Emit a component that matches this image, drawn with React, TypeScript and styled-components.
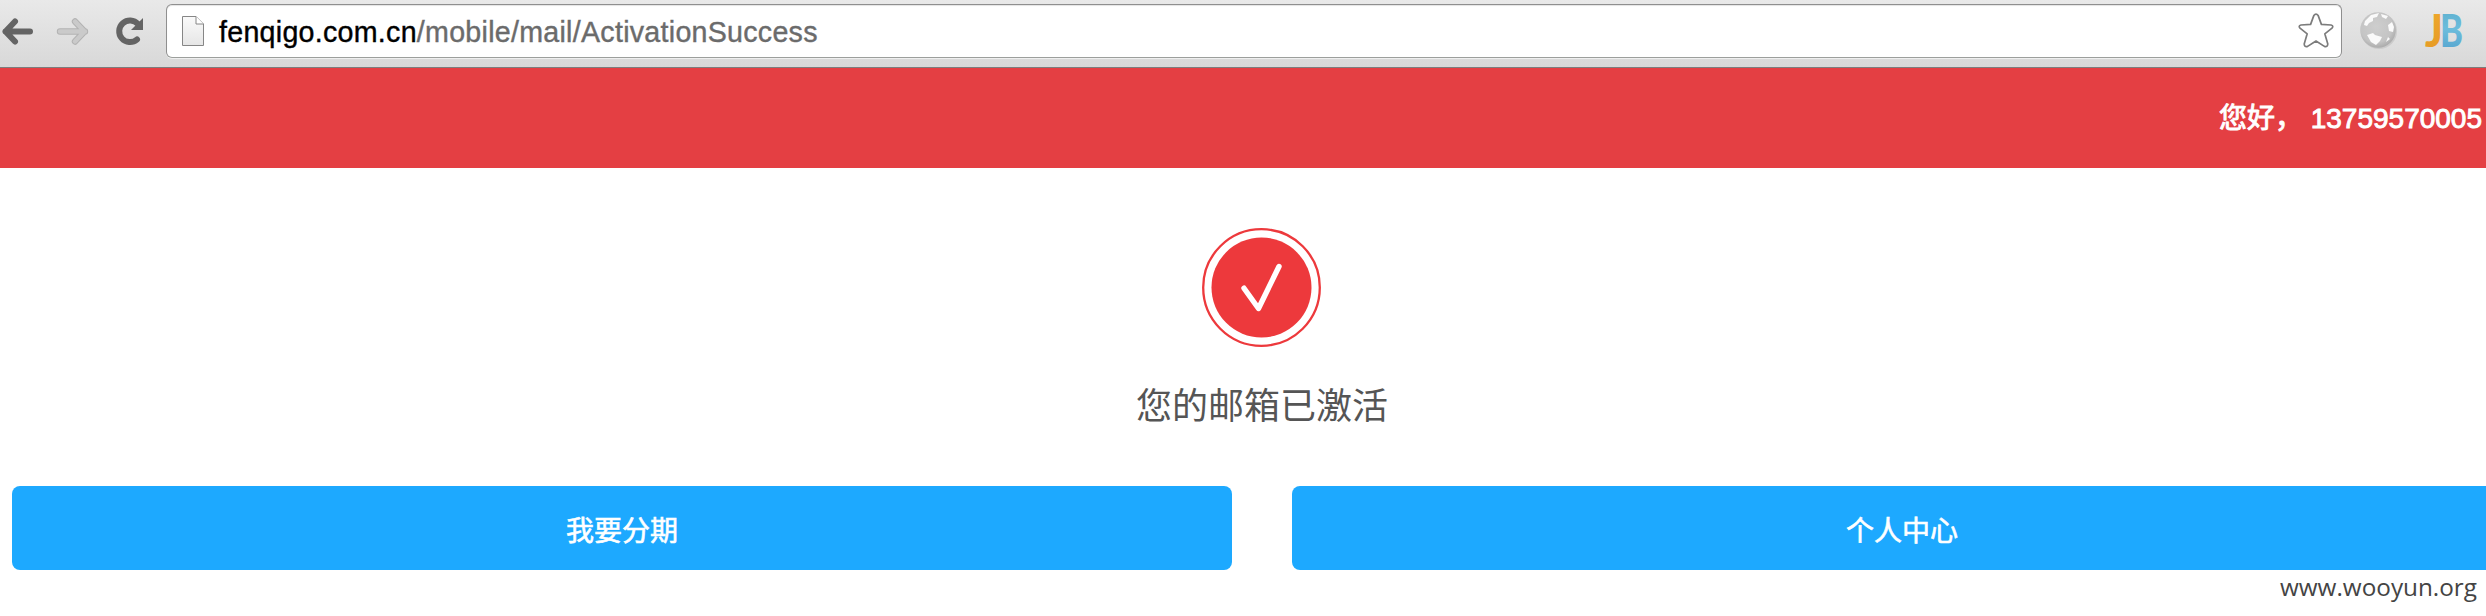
import React from "react";
import styled, { createGlobalStyle } from "styled-components";

const GlobalStyle = createGlobalStyle`
  * { box-sizing: border-box; }
  html, body { margin: 0; background: #fff; overflow: hidden; }
  body { font-family: "Liberation Sans", "Noto Sans CJK SC", sans-serif; }
`;

const Screen = styled.div`
  position: relative;
  width: 100vw;
  height: 616px;
  overflow: hidden;
`;

const Toolbar = styled.div`
  display: flex;
  align-items: flex-start;
  height: 68px;
  background: linear-gradient(#e9e9e9, #d8d8d8);
  border-bottom: 1px solid #7d7d7d;
`;

const NavIcons = styled.div`
  flex: none;
  width: 166px;
  height: 67px;
`;

const AddressBar = styled.div`
  display: flex;
  align-items: center;
  flex: none;
  width: 2176px;
  height: 54px;
  margin-top: 4px;
  padding: 0 7px 0 14px;
  background: #fff;
  border: 1px solid #8f8f8f;
  border-bottom-color: #9c9f9c;
  border-radius: 6px;
  box-shadow: inset 0 1px 1px #e4e4e4, 0 1px 0 #efefef;
`;

const Url = styled.div`
  flex: 1;
  margin-left: 14px;
  padding-top: 2px;
  font-size: 28.6px;
  line-height: 32px;
  letter-spacing: 0.28px;
  color: #6b6b6b;
  white-space: nowrap;
  -webkit-text-stroke: 0.4px currentColor;
`;

const Host = styled.span`
  color: #000;
`;

const Extensions = styled.div`
  flex: 1;
  height: 67px;
`;

const Header = styled.header`
  display: flex;
  align-items: center;
  justify-content: flex-end;
  height: 100px;
  padding: 2px 4px 0 0;
  background: #e43f43;
  color: #fff;
  font-size: 28px;
  line-height: 40px;
  font-weight: 400;
  -webkit-text-stroke: 0.9px currentColor;
`;

const Content = styled.main`
  display: flex;
  flex-direction: column;
  align-items: center;
  width: 2524px;
  padding: 59px 12px 0;
`;

const Title = styled.h1`
  margin: 33px 0 0;
  height: 54px;
  font-size: 36px;
  line-height: 54px;
  font-weight: 400;
  color: #555;
`;

const Actions = styled.div`
  display: flex;
  gap: 60px;
  width: 100%;
  margin-top: 52px;
`;

const Action = styled.button`
  flex: 1;
  height: 84px;
  padding: 1px 0 0;
  border: 0;
  border-radius: 8px;
  background: #1da9ff;
  color: #fff;
  font: 400 28px/40px "Noto Sans CJK SC", sans-serif;
  -webkit-text-stroke: 0.6px currentColor;
`;

const Watermark = styled.div`
  position: absolute;
  right: 9px;
  top: 570px;
  font: 24.3px/34px "Open Sans", sans-serif;
  color: #444;
`;

const Navigation = () => (
  <svg width="166" height="67" viewBox="0 0 166 67" fill="none" strokeLinecap="round" strokeLinejoin="round">
    <g stroke="#646464" strokeWidth="6">
      <path d="M5.5 31.5H30M15 21.5L5.5 31.5L15 41.5" />
      <path d="M137 39.5A10.8 10.8 0 1 1 138 24" />
    </g>
    <path d="M143 18V30H131Z" fill="#646464" />
    <path d="M60 31.5H85M75 21.5L84.5 31.5L75 41.5" stroke="#b3b3b3" strokeWidth="6.4" />
    <path d="M60 31.5H85M75 21.5L84.5 31.5L75 41.5" stroke="#cacaca" strokeWidth="4.4" />
  </svg>
);

const PageIcon = () => (
  <svg width="24" height="32" viewBox="0 0 24 32">
    <defs>
      <linearGradient id="paper" x2="0" y2="1">
        <stop stopColor="#fafafa" />
        <stop offset="1" stopColor="#e6e6e6" />
      </linearGradient>
    </defs>
    <path d="M1.5 1.5H15L22.5 9V30.5H1.5Z" fill="url(#paper)" stroke="#868686" />
    <path d="M15 1.5V9H22.5" fill="#fff" stroke="#868686" />
  </svg>
);

const Star = () => (
  <svg width="36" height="36" viewBox="0 0 36 36" fill="none">
    <path
      d="M15.8 2.6Q18 -.4 20.2 2.6L23.4 11.4L33 12Q36 13 34 15.2L26.8 20.8L29.8 31Q29.6 34.4 26.4 33.4L18 28L9.6 33.4Q6.4 34.4 6.2 31L9.2 20.8L2 15.2Q0 13 3 12L12.6 11.4Z"
      stroke="#7c7c7c"
      strokeWidth="1.7"
      strokeLinejoin="round"
    />
  </svg>
);

const ExtensionIcons = () => (
  <svg width="144" height="67" viewBox="2342 0 144 67">
    <defs>
      <radialGradient id="globe" cx=".45" cy=".4" r=".6">
        <stop stopColor="#cecece" />
        <stop offset=".75" stopColor="#c4c4c4" />
        <stop offset="1" stopColor="#acacac" />
      </radialGradient>
      <linearGradient id="amber" x2="0" y2="1">
        <stop stopColor="#f0a92c" />
        <stop offset="1" stopColor="#e59a24" />
      </linearGradient>
      <linearGradient id="sky" x2="0" y2="1">
        <stop stopColor="#58abc9" />
        <stop offset=".5" stopColor="#6cbcdc" />
        <stop offset="1" stopColor="#519fcb" />
      </linearGradient>
    </defs>
    <circle cx="2379" cy="31" r="18" fill="#cbcbcb" />
    <circle cx="2378" cy="30" r="17.8" fill="url(#globe)" />
    <g fill="#fafafa">
      <path d="M2365 21L2371 15L2379 13L2377 17L2373 18L2373 21L2369 23L2367 26L2364 25Z" />
      <path d="M2381 14L2388 16L2386 19L2382 17ZM2388 25L2392 22L2394 27L2393 32L2389 31Z" />
      <path d="M2367 35L2373 33L2375 35L2382 37L2380 41L2376 45L2371 42Z" />
      <path d="M2388 37L2390 39L2386 42Z" />
    </g>
    <g fontFamily="Lato" fontWeight="900" fontSize="46">
      <text x="2425" y="46.5" fill="url(#amber)" textLength="18" lengthAdjust="spacingAndGlyphs">J</text>
      <text x="2440" y="46.5" fill="url(#sky)" textLength="23" lengthAdjust="spacingAndGlyphs">B</text>
    </g>
  </svg>
);

const SuccessIcon = () => (
  <svg width="120" height="120" viewBox="0 0 120 120" fill="none">
    <circle cx="59.5" cy="60.5" r="58.3" stroke="#ed393c" strokeWidth="2.3" />
    <circle cx="59.5" cy="60.5" r="50" fill="#ed393c" />
    <path d="M42 61.2L56.5 81.5L77 39.5" stroke="#fff" strokeWidth="5.4" strokeLinecap="round" strokeLinejoin="round" />
  </svg>
);

export default function App() {
  return (
    <Screen>
      <GlobalStyle />
      <Toolbar>
        <NavIcons><Navigation /></NavIcons>
        <AddressBar>
          <PageIcon />
          <Url><Host>fenqigo.com.cn</Host>/mobile/mail/ActivationSuccess</Url>
          <Star />
        </AddressBar>
        <Extensions><ExtensionIcons /></Extensions>
      </Toolbar>
      <Header>您好，&nbsp;13759570005</Header>
      <Content>
        <SuccessIcon />
        <Title>您的邮箱已激活</Title>
        <Actions>
          <Action>我要分期</Action>
          <Action>个人中心</Action>
        </Actions>
      </Content>
      <Watermark>www.wooyun.org</Watermark>
    </Screen>
  );
}
